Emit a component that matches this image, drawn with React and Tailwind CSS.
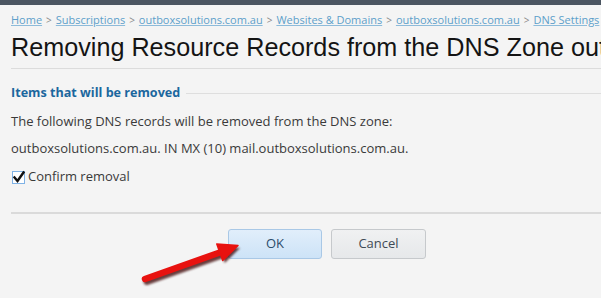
const crumbs = [
  "Home",
  "Subscriptions",
  "outboxsolutions.com.au",
  "Websites & Domains",
  "outboxsolutions.com.au",
  "DNS Settings",
];

const Arrow = () => (
  <svg
    className="absolute left-0 top-0 pointer-events-none"
    width="601"
    height="298"
    viewBox="0 0 601 298"
  >
    <defs>
      <filter id="sh" x="-20%" y="-20%" width="140%" height="140%">
        <feGaussianBlur stdDeviation="1.2" />
      </filter>
    </defs>
    <g transform="translate(2 2.5)" filter="url(#sh)" opacity="0.75">
      <line x1="145" y1="279" x2="224" y2="251" stroke="#3a0000" strokeWidth="7" strokeLinecap="round" />
      <polygon points="238,245.5 222.7,260.5 216.8,244" fill="#3a0000" />
    </g>
    <line x1="145" y1="279" x2="224" y2="251" stroke="#e8120f" strokeWidth="6.5" strokeLinecap="round" />
    <polygon points="238,245.5 222.7,260.5 216.8,244" fill="#e8120f" stroke="#e8120f" strokeWidth="1.5" strokeLinejoin="round" />
  </svg>
);

const Checkbox = () => (
  <span className="relative w-[13px] h-[13px] border border-[#7fb2e5] bg-white shrink-0">
    <svg className="absolute -left-[1px] -top-[2px]" width="14" height="14" viewBox="0 0 14 14">
      <path d="M2.5 7.5 L5.5 11 L11.5 2.5" fill="none" stroke="#111" strokeWidth="2.4" strokeLinecap="square" />
    </svg>
  </span>
);

export default function App() {
  return (
    <div className="relative w-[601px] h-[298px] overflow-hidden bg-[#f4f4f4] text-[#3a3a3a] font-['Open_Sans',sans-serif]">
      <div className="h-[5px] bg-[#4b5561]" />
      <div className="pl-[11px]">
        <nav className="mt-[7px] h-[16px] flex items-center whitespace-nowrap text-[11px] leading-[16px]">
          {crumbs.map((c, i) => (
            <span key={i} className="flex items-center">
              <a className="text-[#5d9fca] underline decoration-[#8dbbda]">{c}</a>
              <span className="text-[#888] mx-[4px] text-[10px]">&gt;</span>
            </span>
          ))}
        </nav>
        <div className="border-b border-[#dcdcdc]">
          <h1 className="pt-[4px] pb-[6px] text-[25.2px] leading-[30px] text-[#141414] whitespace-nowrap font-['Liberation_Sans',Arial,sans-serif]">
            Removing Resource Records from the DNS Zone outboxsolutions.com.au
          </h1>
        </div>

        <div className="mt-[14px] h-[20px] flex items-center">
          <span className="text-[12.6px] font-bold text-[#1b679e] whitespace-nowrap">
            Items that will be removed
          </span>
          <span className="flex-1 h-px bg-[#dedede] ml-[6px]" />
        </div>

        <p className="mt-[8px] h-[20px] leading-[20px] text-[13px] whitespace-nowrap">
          The following DNS records will be removed from the DNS zone:
        </p>
        <p className="mt-[7px] h-[20px] leading-[20px] text-[13px] whitespace-nowrap">
          outboxsolutions.com.au. IN MX (10) mail.outboxsolutions.com.au.
        </p>
        <label className="mt-[9px] h-[20px] flex items-center gap-[3px] pl-px text-[13px]">
          <Checkbox />
          <span>Confirm removal</span>
        </label>

        <div className="mt-[25px] h-[2px] bg-[#dadada]" />

        <div className="mt-[15px] flex gap-[9px] pl-[217px]">
          <button className="w-[94px] h-[30px] rounded-[3px] border border-[#a9c8e6] bg-gradient-to-b from-[#e1eefb] to-[#cde3f7] text-[#2b4c6b] text-[13px]">
            OK
          </button>
          <button className="w-[95px] h-[30px] rounded-[3px] border border-[#c6c9cc] bg-gradient-to-b from-[#f0f1f2] to-[#e6e8ea] text-[#3f4a55] text-[13px]">
            Cancel
          </button>
        </div>
      </div>
      <Arrow />
    </div>
  );
}
